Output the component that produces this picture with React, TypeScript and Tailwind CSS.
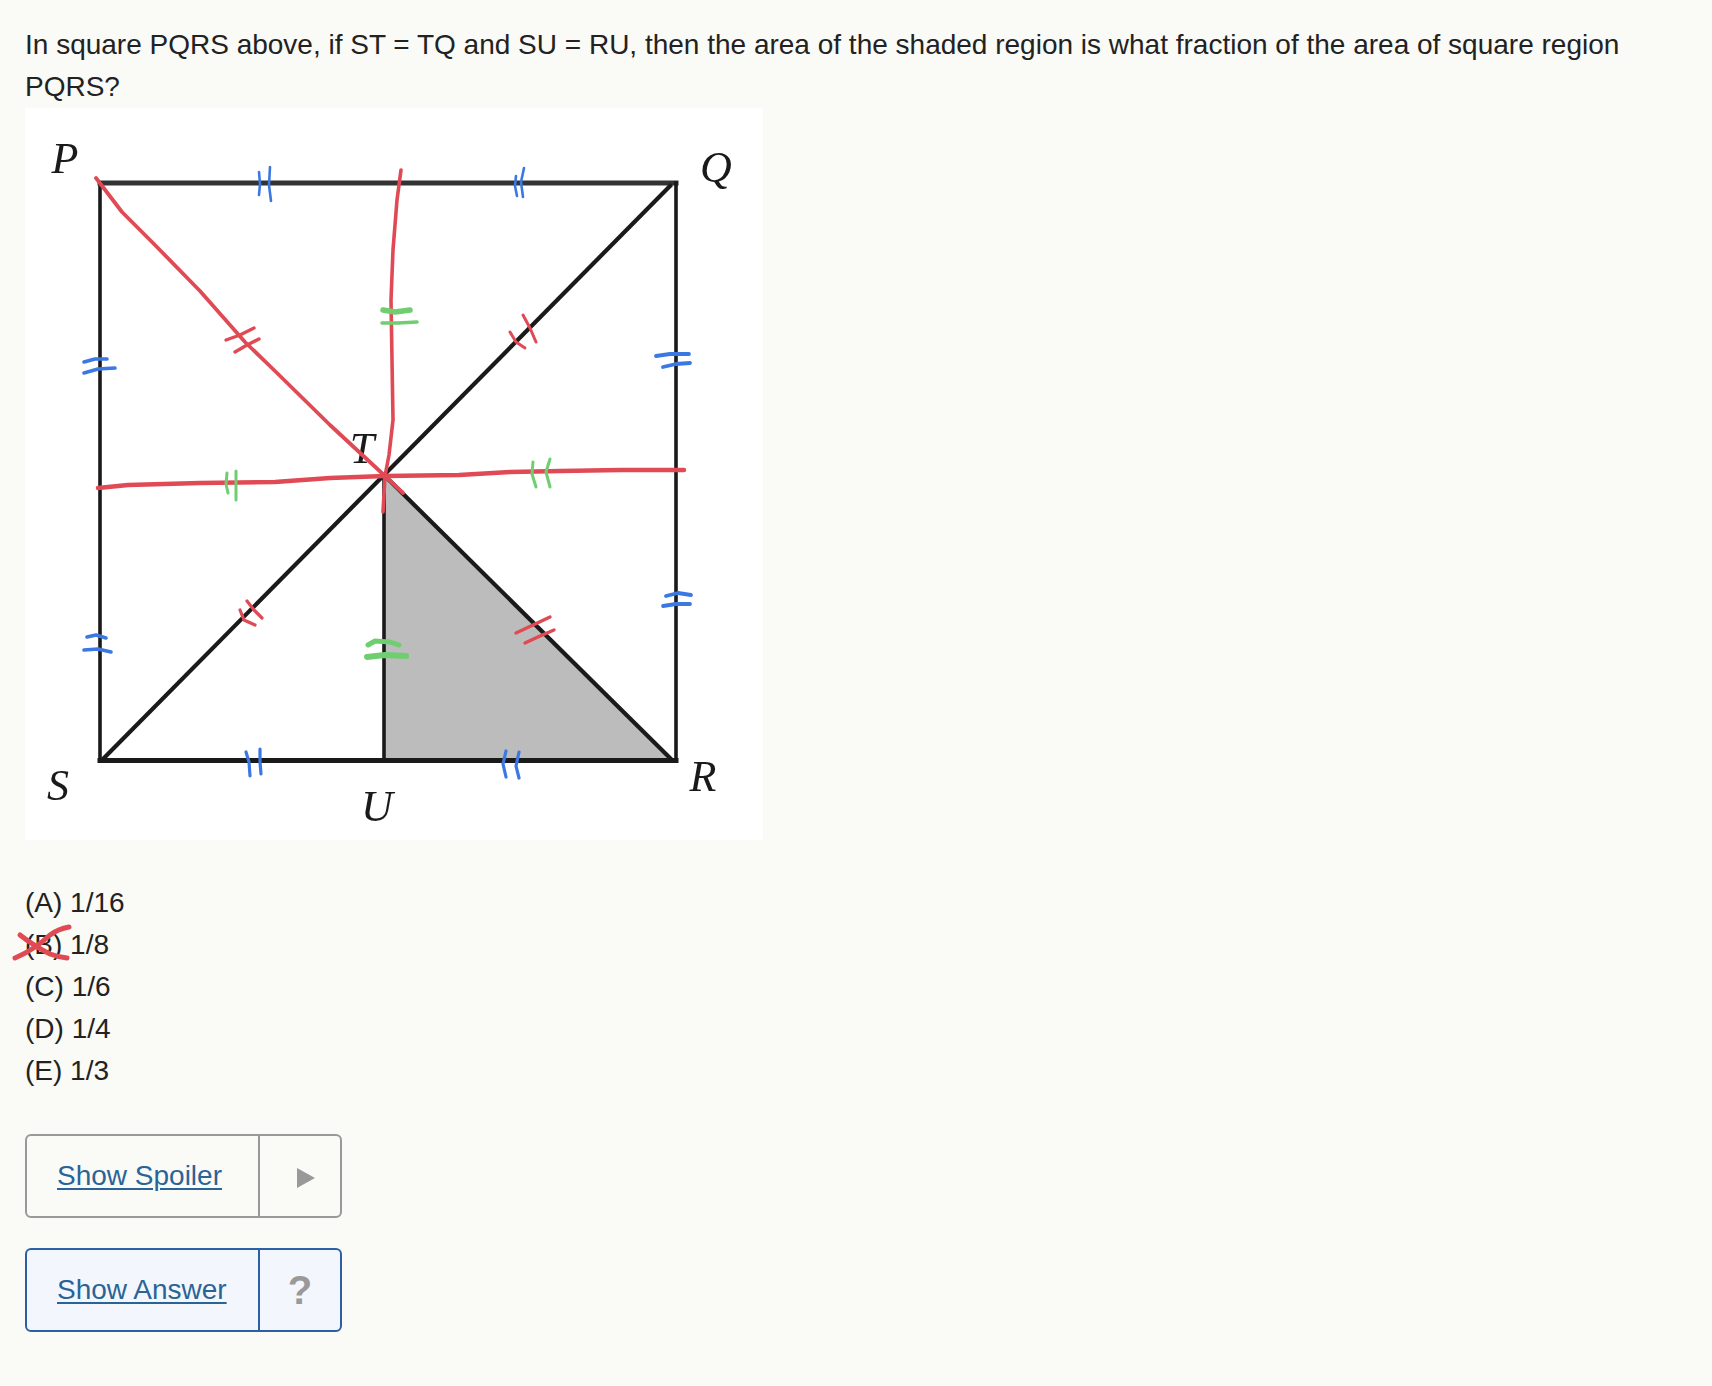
const RED = '#e04a55';
const BLUE = '#3b78e2';
const GREEN = '#6fce70';

// [points, colour, stroke width]
const marks: [string, string, number][] = [
  // top ticks
  ['259,172 260,184 259,195', BLUE, 2.6],
  ['270,167 269,185 271,201', BLUE, 2.6],
  ['516,176 515,186 517,196', BLUE, 2.6],
  ['524,168 521,182 523,197', BLUE, 2.6],
  // left side ticks
  ['84,362 95,359 107,359', BLUE, 3.6],
  ['84,373 98,369 115,368', BLUE, 3.6],
  ['87,637 96,635 106,638', BLUE, 3.6],
  ['84,650 98,649 111,652', BLUE, 3.6],
  // right side ticks
  ['656,356 670,354 689,354', BLUE, 3.8],
  ['663,367 676,364 690,363', BLUE, 3.8],
  ['666,596 678,593 691,595', BLUE, 3.8],
  ['663,606 676,604 690,604', BLUE, 3.8],
  // bottom ticks
  ['246,752 249,762 250,776', BLUE, 3.2],
  ['260,749 260,762 261,774', BLUE, 3.2],
  ['506,751 503,764 506,777', BLUE, 3.2],
  ['519,752 516,766 519,778', BLUE, 3.2],
  // green ticks
  ['383,310 395,312 410,310', GREEN, 5.5],
  ['382,323 398,323 417,322', GREEN, 3.6],
  ['368,645 375,641 390,642 399,645', GREEN, 5],
  ['367,657 385,655 406,656', GREEN, 6],
  ['227,473 226,484 228,493', GREEN, 3],
  ['236,471 236,486 236,500', GREEN, 3],
  ['533,462 532,474 536,487', GREEN, 3],
  ['550,459 546,472 550,487', GREEN, 3],
  // red ticks
  ['226,340 240,335 254,328', RED, 3.4],
  ['235,352 247,345 259,339', RED, 3.4],
  ['516,633 533,625 550,617', RED, 3.4],
  ['525,643 540,636 554,630', RED, 3.4],
  ['510,332 516,342 525,348', RED, 3],
  ['523,315 530,328 536,342 ', RED, 3],
  ['247,601 254,610 262,618', RED, 3.2],
  ['240,610 244,620 255,625', RED, 3.2],
];

const labels: [string, number, number][] = [
  ['P', 65, 173],
  ['Q', 716, 182],
  ['T', 362, 463],
  ['R', 703, 791],
  ['S', 58, 800],
  ['U', 377, 821],
];

function Figure() {
  return (
    <svg viewBox="25 108 738 732" className="block h-[732px] w-[738px] bg-white blur-[0.4px]">
      <polygon points="384,476 384,760 672,760" fill="#bcbcbc" />
      <g fill="none" stroke="#1a1a1a" strokeLinecap="square">
        <path d="M100 183H676" stroke="#333" strokeWidth={5} />
        <path d="M100 183V760M676 183V760" strokeWidth={3.6} />
        <path d="M100 760.5H676" strokeWidth={5} />
        <path d="M670 186L104 758" strokeWidth={4.2} />
        <path d="M385 476L670 758" strokeWidth={4.2} />
        <path d="M384 476V760" strokeWidth={3.6} />
      </g>
      {labels.map(([label, x, y]) => (
        <text
          key={label}
          x={x}
          y={y}
          textAnchor="middle"
          fill="#1a1a1a"
          className="font-['Liberation_Serif',serif] text-[44px] italic"
        >
          {label}
        </text>
      ))}
      <g fill="none" strokeLinecap="round" strokeLinejoin="round">
        <polyline
          points="96,178 122,212 153,243 200,291 245,342 275,371 330,425 385,476 403,493"
          stroke={RED}
          strokeWidth={3.8}
        />
        <polyline
          points="401,170 397,200 393,250 391,300 393,420 389,455 385,476 383,512"
          stroke={RED}
          strokeWidth={3.6}
        />
        <polyline
          points="98,488 128,485 200,483 275,482 330,478 385,476 459,475 510,472 561,471 620,470 684,470"
          stroke={RED}
          strokeWidth={4.4}
        />
        {marks.map(([points, color, width]) => (
          <polyline key={points} points={points} stroke={color} strokeWidth={width} />
        ))}
      </g>
    </svg>
  );
}

function ActionButton({
  label,
  className,
  dividerClassName,
  children,
}: {
  label: string;
  className: string;
  dividerClassName: string;
  children: React.ReactNode;
}) {
  return (
    <div className={`flex h-[84px] w-[317px] rounded-md border-2 ${className}`}>
      <div className={`flex w-[233px] items-center border-r-2 pl-[30px] ${dividerClassName}`}>
        <a href="#" className="text-[#2a6496] underline underline-offset-[3px] decoration-2">
          {label}
        </a>
      </div>
      <div className="flex flex-1 items-center justify-center">{children}</div>
    </div>
  );
}

export default function App() {
  const options = ['(A) 1/16', '(B) 1/8', '(C) 1/6', '(D) 1/4', '(E) 1/3'];

  return (
    <div className="min-h-[1386px] bg-[#fafaf6] pl-[25px] pt-[24px] font-['Liberation_Sans',Arial,sans-serif] text-[28px] leading-[42px] text-[#222]">
      <p className="w-[1640px]">
        In square PQRS above, if ST = TQ and SU = RU, then the area of the shaded region is what fraction of the area of square region PQRS?
      </p>
      <Figure />
      <div className="mt-[42px]">
        {options.map((option) => (
          <div key={option} className="relative">
            {option}
            {option.startsWith('(B)') && (
              <svg viewBox="0 0 60 34" className="absolute left-[-11px] top-[2px] h-[34px] w-[60px] overflow-visible">
                <g fill="none" stroke={RED} strokeWidth={5} strokeLinecap="round" strokeLinejoin="round">
                  <path d="M6 9 Q20 20 36 28 Q44 31 53 32" />
                  <path d="M1 32 Q20 24 36 9 Q44 3 55 1" />
                </g>
              </svg>
            )}
          </div>
        ))}
      </div>
      <div className="mt-[42px] flex flex-col gap-[30px]">
        <ActionButton label="Show Spoiler" className="border-[#999]" dividerClassName="border-[#999]">
          <svg viewBox="0 0 18 20" className="ml-[12px] mt-[3px] h-[20px] w-[18px]">
            <polygon points="0,0 18,10 0,20" fill="#999" />
          </svg>
        </ActionButton>
        <ActionButton
          label="Show Answer"
          className="border-[#2d5fa5] bg-[#f3f7fd]"
          dividerClassName="border-[#2d5fa5]"
        >
          <span className="text-[40px] font-bold text-[#999]">?</span>
        </ActionButton>
      </div>
    </div>
  );
}
